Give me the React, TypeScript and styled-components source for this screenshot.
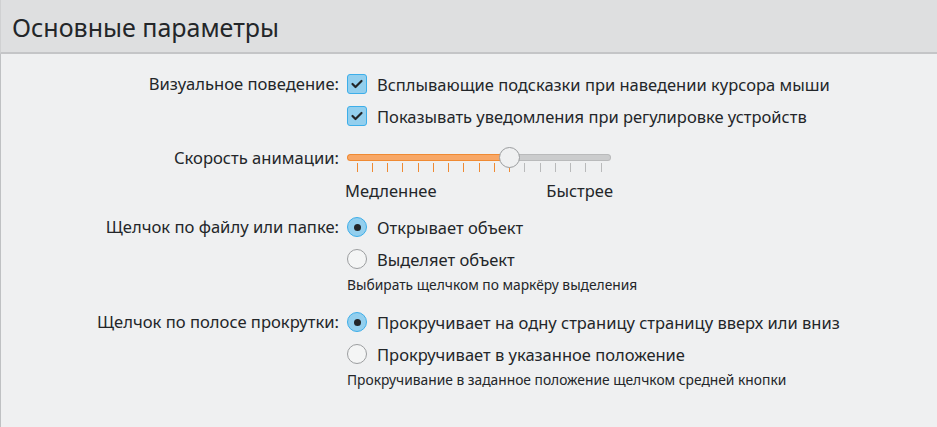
import React from "react"
import styled, { createGlobalStyle } from "styled-components"

const GlobalStyle = createGlobalStyle`
  html, body {
    margin: 0;
    padding: 0;
    background: #eff0f1;
  }
  body {
    font-family: "Noto Sans", "Open Sans", sans-serif;
    color: #232629;
  }
`

const Page = styled.div`
  width: 937px;
  height: 427px;
  display: flex;
  flex-direction: column;
  background: #eff0f1;
  overflow: hidden;
`

const Header = styled.div`
  height: 52px;
  flex-shrink: 0;
  display: flex;
  align-items: center;
  padding-left: 11px;
  background: #dedfe0;
  border-bottom: 2px solid #c4c5c7;
  border-left: 1px solid #d0d1d2;
`

const Title = styled.h1`
  margin: 0;
  font-size: 25px;
  font-weight: 400;
  color: #232629;
  padding-top: 2px;
`

const Body = styled.div`
  flex: 1;
  border-left: 1px solid #bfc1c3;
  padding-top: 14px;
  display: flex;
  flex-direction: column;
`

const Section = styled.div<{ $gap: number }>`
  display: grid;
  grid-template-columns: 338px 1fr;
  column-gap: 8px;
  margin-top: ${({ $gap }) => $gap}px;
`

const Label = styled.div<{ $height: number }>`
  text-align: right;
  font-size: 16.6px;
  height: ${({ $height }) => $height}px;
  line-height: ${({ $height }) => $height}px;
  white-space: nowrap;
`

const Controls = styled.div`
  display: flex;
  flex-direction: column;
`

const OptionRow = styled.div`
  height: 32px;
  display: flex;
  align-items: center;
  gap: 10px;
  font-size: 16.5px;
  white-space: nowrap;
`

const CheckBox = styled.span<{ $checked: boolean }>`
  width: 20px;
  height: 20px;
  box-sizing: border-box;
  border-radius: 3px;
  border: 1px solid ${({ $checked }) => ($checked ? "#3daee9" : "#a4a6a8")};
  background: ${({ $checked }) => ($checked ? "#93cfee" : "#f7f7f8")};
  display: flex;
  align-items: center;
  justify-content: center;
  flex-shrink: 0;
`

const Radio = styled.span<{ $checked: boolean }>`
  width: 20px;
  height: 20px;
  box-sizing: border-box;
  border-radius: 50%;
  border: 1px solid ${({ $checked }) => ($checked ? "#3daee9" : "#9c9ea0")};
  background: ${({ $checked }) => ($checked ? "#93cfee" : "#f4f5f5")};
  display: flex;
  align-items: center;
  justify-content: center;
  flex-shrink: 0;

  &::after {
    content: "";
    display: ${({ $checked }) => ($checked ? "block" : "none")};
    width: 7px;
    height: 7px;
    border-radius: 50%;
    background: #232629;
  }
`

const Hint = styled.div`
  font-size: 13.8px;
  height: 18px;
  line-height: 18px;
  margin-top: 1px;
  white-space: nowrap;
`

const SliderBox = styled.div`
  width: 264px;
  display: flex;
  flex-direction: column;
`

const SliderTrack = styled.div`
  position: relative;
  height: 21px;
  display: flex;
  align-items: center;
`

const Groove = styled.div`
  flex: 1;
  height: 7px;
  display: flex;
`

const GrooveFill = styled.div`
  height: 7px;
  box-sizing: border-box;
  background: #f8a766;
  border: 1px solid #ef8a33;
  border-right: none;
  border-radius: 4px 0 0 4px;
`

const GrooveRest = styled.div`
  flex: 1;
  height: 7px;
  box-sizing: border-box;
  background: #cbcccd;
  border: 1px solid #b9babb;
  border-left: none;
  border-radius: 0 4px 4px 0;
`

const Thumb = styled.div`
  position: absolute;
  top: 0;
  width: 21px;
  height: 21px;
  box-sizing: border-box;
  margin-left: -10.5px;
  border-radius: 50%;
  border: 1px solid #9a9c9e;
  background: #eff0f1;
`

const Ticks = styled.div`
  height: 9px;
  margin-top: -5px;
  padding: 0 9.5px;
  display: flex;
  justify-content: space-between;
`

const Tick = styled.span<{ $active: boolean }>`
  width: 1px;
  height: 9px;
  background: ${({ $active }) => ($active ? "#ef8a33" : "#b9babb")};
`

const SliderLabels = styled.div`
  display: flex;
  justify-content: space-between;
  font-size: 16.5px;
  height: 20px;
  line-height: 20px;
  margin-top: 9px;
  margin-left: -2px;
  margin-right: -2px;
`

const Check = () => (
  <svg width="14" height="14" viewBox="0 0 14 14">
    <polyline points="2.5,7 5.5,10 11.5,4" fill="none" stroke="#232629" strokeWidth="2.2" strokeLinecap="round" strokeLinejoin="round" />
  </svg>
)

const CheckOption = ({ text, checked }: { text: string; checked: boolean }) => (
  <OptionRow>
    <CheckBox $checked={checked}>{checked && <Check />}</CheckBox>
    <span>{text}</span>
  </OptionRow>
)

const RadioOption = ({ text, checked }: { text: string; checked: boolean }) => (
  <OptionRow>
    <Radio $checked={checked} />
    <span>{text}</span>
  </OptionRow>
)

const SpeedSlider = ({ value, max }: { value: number; max: number }) => {
  const width = 264
  const inset = 10
  const pos = inset + ((width - inset * 2) * value) / max
  const ticks = []
  for (let i = 0; i <= max; i++) ticks.push(<Tick key={i} $active={i <= value} />)
  return (
    <SliderBox>
      <SliderTrack>
        <Groove>
          <GrooveFill style={{ width: pos }} />
          <GrooveRest />
        </Groove>
        <Thumb style={{ left: pos }} />
      </SliderTrack>
      <Ticks>{ticks}</Ticks>
      <SliderLabels>
        <span>Медленнее</span>
        <span>Быстрее</span>
      </SliderLabels>
    </SliderBox>
  )
}

export default function App() {
  return (
    <Page>
      <GlobalStyle />
      <Header>
        <Title>Основные параметры</Title>
      </Header>
      <Body>
        <Section $gap={0}>
          <Label $height={32}>Визуальное поведение:</Label>
          <Controls>
            <CheckOption checked text="Всплывающие подсказки при наведении курсора мыши" />
            <CheckOption checked text="Показывать уведомления при регулировке устройств" />
          </Controls>
        </Section>
        <Section $gap={15}>
          <Label $height={21}>Скорость анимации:</Label>
          <SpeedSlider value={10} max={16} />
        </Section>
        <Section $gap={10}>
          <Label $height={32}>Щелчок по файлу или папке:</Label>
          <Controls>
            <RadioOption checked text="Открывает объект" />
            <RadioOption checked={false} text="Выделяет объект" />
            <Hint>Выбирать щелчком по маркёру выделения</Hint>
          </Controls>
        </Section>
        <Section $gap={12}>
          <Label $height={32}>Щелчок по полосе прокрутки:</Label>
          <Controls>
            <RadioOption checked text="Прокручивает на одну страницу страницу вверх или вниз" />
            <RadioOption checked={false} text="Прокручивает в указанное положение" />
            <Hint>Прокручивание в заданное положение щелчком средней кнопки</Hint>
          </Controls>
        </Section>
      </Body>
    </Page>
  )
}
